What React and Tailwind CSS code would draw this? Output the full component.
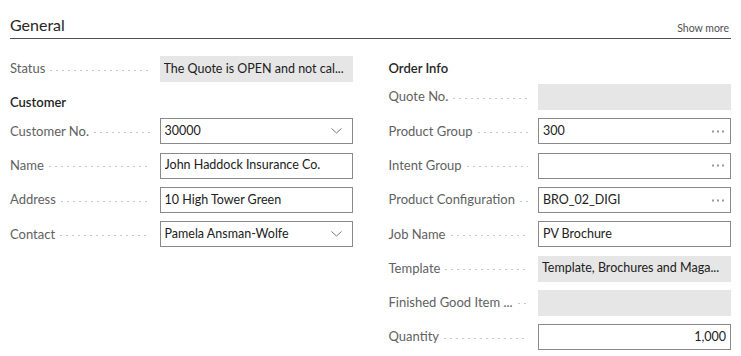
import React from "react";

const Leader = () => (
  <div className="ml-[5px] mr-[10px] h-px flex-1 self-center translate-y-[1px] bg-[repeating-linear-gradient(to_right,#c8c8c8_0_2px,transparent_2px_6px)]" />
);

const Chevron = () => (
  <svg width="11" height="6" viewBox="0 0 11 6" className="shrink-0">
    <polyline points="0.5,0.5 5.5,5 10.5,0.5" fill="none" stroke="#7a7a7a" strokeWidth="1" />
  </svg>
);

const Dots = () => (
  <svg width="12" height="3" viewBox="0 0 12 3" className="shrink-0">
    <rect x="0" y="0.5" width="2" height="2" fill="#9a9a9a" />
    <rect x="5" y="0.5" width="2" height="2" fill="#9a9a9a" />
    <rect x="10" y="0.5" width="2" height="2" fill="#9a9a9a" />
  </svg>
);

function Field({ value = "", kind = "text", disabled = false, right = false }) {
  if (disabled) {
    return (
      <div className="flex h-[26px] w-[193px] shrink-0 items-center bg-[#e6e6e6] pl-[4px] pr-[4px] text-[12.5px] text-[#212121]">
        <span className="whitespace-nowrap overflow-hidden">{value}</span>
      </div>
    );
  }
  return (
    <div className="flex h-[26px] w-[193px] shrink-0 items-center border border-[#8a8a8a] bg-white pl-[4px] pr-[6px] text-[12.5px] text-[#212121]">
      <span className={"flex-1 truncate " + (right ? "text-right mr-[-2px]" : "")}>{value}</span>
      {kind === "select" && <span className="mr-[4px] flex"><Chevron /></span>}
      {kind === "lookup" && <Dots />}
    </div>
  );
}

function Row({ label, ...rest }) {
  return (
    <div className="flex h-[34.3px] items-center">
      <div className="flex min-w-0 flex-1 items-center">
        <span className="whitespace-nowrap text-[13px] text-[#616161]">{label}</span>
        <Leader />
      </div>
      <Field {...rest} />
    </div>
  );
}

const GroupHeader = ({ children }) => (
  <div className="h-[28px] pt-[6px] text-[13px] font-semibold leading-[20px] text-[#262626]">{children}</div>
);

export default function App() {
  return (
    <div className="h-[356px] w-[741px] bg-white px-[10px] font-['Lato','Open_Sans',sans-serif]">
      <div className="flex h-[39px] items-end justify-between border-b border-[#505050] pb-[3px]">
        <span className="text-[16px] leading-[20px] text-[#262626]">General</span>
        <span className="mr-[2px] text-[10.5px] leading-[14px] text-[#505050]">Show more</span>
      </div>
      <div className="mt-[13px] grid grid-cols-2 gap-x-[36px]">
        <div className="flex flex-col">
          <Row label="Status" value="The Quote is OPEN and not cal..." disabled />
          <GroupHeader>Customer</GroupHeader>
          <Row label="Customer No." value="30000" kind="select" />
          <Row label="Name" value="John Haddock Insurance Co." />
          <Row label="Address" value="10 High Tower Green" />
          <Row label="Contact" value="Pamela Ansman-Wolfe" kind="select" />
        </div>
        <div className="flex flex-col">
          <GroupHeader>Order Info</GroupHeader>
          <Row label="Quote No." disabled />
          <Row label="Product Group" value="300" kind="lookup" />
          <Row label="Intent Group" kind="lookup" />
          <Row label="Product Configuration" value="BRO_02_DIGI" kind="lookup" />
          <Row label="Job Name" value="PV Brochure" />
          <Row label="Template" value="Template, Brochures and Maga..." disabled />
          <Row label="Finished Good Item ..." disabled />
          <Row label="Quantity" value="1,000" right />
        </div>
      </div>
    </div>
  );
}
